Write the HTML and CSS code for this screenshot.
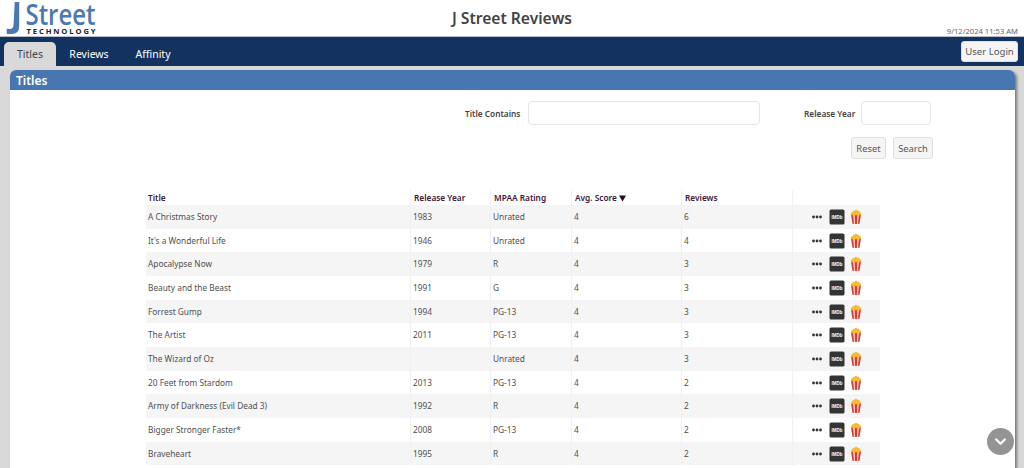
FILE: index.html
```
<!DOCTYPE html>
<html lang="en">
<head>
<meta charset="utf-8">
<title>J Street Reviews</title>
<link rel="stylesheet" href="styles.css">
</head>
<body>
<svg class="defs" width="0" height="0">
  <symbol id="imdb" viewBox="0 0 16 16">
    <rect x=".5" y=".5" width="15" height="15" rx="1.6" fill="#333436"/>
    <text x="8" y="10.2" text-anchor="middle" textLength="11" lengthAdjust="spacingAndGlyphs" class="imdb-text">IMDb</text>
  </symbol>
  <symbol id="popcorn" viewBox="0 0 12 16">
    <path d="M1 5 11 5 9.6 14.4Q6 15.6 2.4 14.4Z" fill="#f3d9cc"/>
    <path d="M1 5H3L4 14.9 2.4 14.4ZM4.7 5.5H7.3L6.9 15H5.1ZM9 5H11L9.6 14.4 8 14.9Z" fill="#d83a2e"/>
    <path d="M.9 5.6Q.5 3.6 2.5 3.1 2.8 1.3 4.6 1.8 6-.1 7.4 1.7 9.3 1.3 9.6 3.1 11.5 3.8 11.1 5.6 9.8 6.8 8.5 5.9 7.3 7 6 6 4.5 7 3.4 5.9 2 6.8.9 5.6Z" fill="#f9b62c"/>
    <path d="M3.5 3.6 4.6 2.8M6 4.4 7.2 3.3M8.6 4.5 9.5 4" stroke="#ffda66" stroke-width=".9"/>
  </symbol>
  <symbol id="dots" viewBox="0 0 10 4">
    <circle cx="1.5" cy="2" r="1.4"/><circle cx="5" cy="2" r="1.4"/><circle cx="8.5" cy="2" r="1.4"/>
  </symbol>
</svg>
<header class="top">
  <div class="logo">
    <svg width="90" height="37" viewBox="0 0 90 37">
      <path d="M11 2H15.5V26Q15.5 34 8 34H3.2L3 28.7 6 29Q9.7 29 9.9 24.5Z" fill="#4a78b2" transform="translate(-2.3)"/>
      <text x="19.5" y="24.5" textLength="70" lengthAdjust="spacingAndGlyphs" class="logo-street">Street</text>
      <text x="20.5" y="34" textLength="69" lengthAdjust="spacing" class="logo-tech">TECHNOLOGY</text>
    </svg>
  </div>
  <h1>J Street Reviews</h1>
  <time>9/12/2024 11:53 AM</time>
</header>
<nav class="nav">
  <a class="tab active">Titles</a><a class="tab reviews">Reviews</a><a class="tab affinity">Affinity</a>
  <button class="login">User Login</button>
</nav>
<main class="panel">
  <h2>Titles</h2>
  <form class="filters">
    <label class="by-title">Title Contains</label><input class="title-input" aria-label="Title Contains">
    <label class="by-year">Release Year</label><input class="year-input" aria-label="Release Year">
  </form>
  <div class="actions"><button class="reset">Reset</button><button class="search">Search</button></div>
  <section class="grid">
    <div class="row head"><b>Title</b><b>Release Year</b><b>MPAA Rating</b><b>Avg. Score <svg class="sort" width="7" height="7" viewBox="0 0 7 7"><path d="M0 .5H7L3.5 6.5Z"/></svg></b><b>Reviews</b><b></b></div>
    <div class="row"><span>A Christmas Story</span><span>1983</span><span>Unrated</span><span>4</span><span>6</span><span class="icons"><svg class="dots"><use href="#dots"/></svg><svg class="imdb"><use href="#imdb"/></svg><svg class="popcorn"><use href="#popcorn"/></svg></span></div>
    <div class="row"><span>It's a Wonderful Life</span><span>1946</span><span>Unrated</span><span>4</span><span>4</span><span class="icons"><svg class="dots"><use href="#dots"/></svg><svg class="imdb"><use href="#imdb"/></svg><svg class="popcorn"><use href="#popcorn"/></svg></span></div>
    <div class="row"><span>Apocalypse Now</span><span>1979</span><span>R</span><span>4</span><span>3</span><span class="icons"><svg class="dots"><use href="#dots"/></svg><svg class="imdb"><use href="#imdb"/></svg><svg class="popcorn"><use href="#popcorn"/></svg></span></div>
    <div class="row"><span>Beauty and the Beast</span><span>1991</span><span>G</span><span>4</span><span>3</span><span class="icons"><svg class="dots"><use href="#dots"/></svg><svg class="imdb"><use href="#imdb"/></svg><svg class="popcorn"><use href="#popcorn"/></svg></span></div>
    <div class="row"><span>Forrest Gump</span><span>1994</span><span>PG-13</span><span>4</span><span>3</span><span class="icons"><svg class="dots"><use href="#dots"/></svg><svg class="imdb"><use href="#imdb"/></svg><svg class="popcorn"><use href="#popcorn"/></svg></span></div>
    <div class="row"><span>The Artist</span><span>2011</span><span>PG-13</span><span>4</span><span>3</span><span class="icons"><svg class="dots"><use href="#dots"/></svg><svg class="imdb"><use href="#imdb"/></svg><svg class="popcorn"><use href="#popcorn"/></svg></span></div>
    <div class="row"><span>The Wizard of Oz</span><span></span><span>Unrated</span><span>4</span><span>3</span><span class="icons"><svg class="dots"><use href="#dots"/></svg><svg class="imdb"><use href="#imdb"/></svg><svg class="popcorn"><use href="#popcorn"/></svg></span></div>
    <div class="row"><span>20 Feet from Stardom</span><span>2013</span><span>PG-13</span><span>4</span><span>2</span><span class="icons"><svg class="dots"><use href="#dots"/></svg><svg class="imdb"><use href="#imdb"/></svg><svg class="popcorn"><use href="#popcorn"/></svg></span></div>
    <div class="row"><span>Army of Darkness (Evil Dead 3)</span><span>1992</span><span>R</span><span>4</span><span>2</span><span class="icons"><svg class="dots"><use href="#dots"/></svg><svg class="imdb"><use href="#imdb"/></svg><svg class="popcorn"><use href="#popcorn"/></svg></span></div>
    <div class="row"><span>Bigger Stronger Faster*</span><span>2008</span><span>PG-13</span><span>4</span><span>2</span><span class="icons"><svg class="dots"><use href="#dots"/></svg><svg class="imdb"><use href="#imdb"/></svg><svg class="popcorn"><use href="#popcorn"/></svg></span></div>
    <div class="row"><span>Braveheart</span><span>1995</span><span>R</span><span>4</span><span>2</span><span class="icons"><svg class="dots"><use href="#dots"/></svg><svg class="imdb"><use href="#imdb"/></svg><svg class="popcorn"><use href="#popcorn"/></svg></span></div>
  </section>
</main>
<button class="scroll" aria-label="Scroll down"><svg width="27" height="27" viewBox="0 0 27 27"><circle cx="13.5" cy="13.5" r="13.5" fill="#949494"/><path d="M9.2 11.5 13.5 15.7 17.8 11.5" fill="none" stroke="#fff" stroke-width="2.2" stroke-linecap="round" stroke-linejoin="round"/></svg></button>
</body>
</html>
```
FILE: styles.css
```
* { box-sizing: border-box; }
body {
  margin: 0;
  height: 468px;
  overflow: hidden;
  display: flex;
  flex-direction: column;
  background: #d9d9d9;
  font-family: "Noto Sans", "Open Sans", sans-serif;
  color: #444;
}
.defs { position: absolute; }
.top {
  flex: none;
  height: 37px;
  display: grid;
  grid-template-columns: 1fr auto 1fr;
  background: #fff;
  border-bottom: 1px solid #b9bfca;
}
.logo { padding-left: 6px; height: 36px; }
.logo svg { display: block; }
.logo-street { font: 600 28px "Open Sans", sans-serif; fill: #4a78b2; }
.logo-tech { font: bold 7.6px "Open Sans", sans-serif; fill: #222; }
h1 { margin: 0; font-size: 15.6px; line-height: 36px; font-weight: 600; color: #444; }
time { justify-self: end; align-self: end; padding-right: 6px; font-size: 7.6px; line-height: 9px; color: #666; }
.nav {
  flex: none;
  height: 29px;
  display: flex;
  align-items: flex-start;
  padding: 5px 6px 0 4px;
  background: #14325f;
}
.tab { height: 24px; line-height: 24px; font-size: 10.5px; color: #fff; text-align: center; }
.active { width: 52px; background: #d9d9d9; color: #444; border-radius: 5px 5px 0 0; }
.reviews { width: 66px; }
.affinity { width: 62px; }
button { padding: 0; font-family: inherit; color: #555; background: #f5f5f5; border: 1px solid #ddd; border-radius: 3px; }
.login { margin: -1px 0 0 auto; width: 57px; height: 21px; font-size: 9.6px; }
.panel {
  flex: 1;
  margin: 4px 9px 0 10px;
  background: #fff;
  border-radius: 6px 6px 0 0;
  box-shadow: 2px 2px 3px #777;
}
h2 {
  margin: 0;
  height: 20px;
  padding-left: 6px;
  font-size: 12px;
  line-height: 21px;
  font-weight: 600;
  color: #fff;
  background: #4876b1;
  border-radius: 6px 6px 0 0;
}
.filters { display: flex; align-items: center; height: 24px; margin-top: 11px; padding-left: 455px; font-size: 8.3px; font-weight: 600; }
.by-title { width: 63px; }
.by-year { width: 57px; margin-left: 44px; }
input { height: 24px; padding: 0; border: 1px solid #e6e6e6; border-radius: 4px; background: #fff; }
.title-input { width: 232px; }
.year-input { width: 70px; }
.actions { display: flex; gap: 7px; justify-content: flex-end; margin: 12px 82px 0 0; }
.actions button { height: 22px; font-size: 9.4px; }
.actions .reset { width: 35px; }
.actions .search { width: 40px; }
.grid { margin: 31px 0 0 136px; width: 734px; }
.row {
  display: grid;
  grid-template-columns: 265px 80px 81px 110px 111px 87px;
  height: 23.67px;
  line-height: 24px;
  font-size: 8.3px;
  color: #505050;
}
.row > * { padding-left: 2px; border-right: 1px solid #f1f1f1; white-space: nowrap; }
.row > :last-child { border-right: 0; }
.row:nth-child(even) { background: #f5f5f5; }
.head { height: 15px; line-height: 16px; color: #401838; }
.head > * { font-weight: 600; padding-left: 3px; }
.head > :first-child { padding-left: 2px; }
.sort { fill: #260d26; vertical-align: -1px; }
.icons { display: flex; align-items: center; }
.row .icons { padding-left: 19px; }
.dots { width: 10px; height: 4px; fill: #333; }
.imdb { width: 16px; height: 16px; margin-left: 7px; }
.popcorn { width: 12px; height: 16px; margin-left: 5px; }
.imdb-text { font: bold 5.5px "Liberation Sans", sans-serif; fill: #fff; }
.scroll { position: absolute; left: 987px; top: 428px; width: 27px; height: 27px; border: 0; background: none; }
.scroll svg { display: block; }
```
